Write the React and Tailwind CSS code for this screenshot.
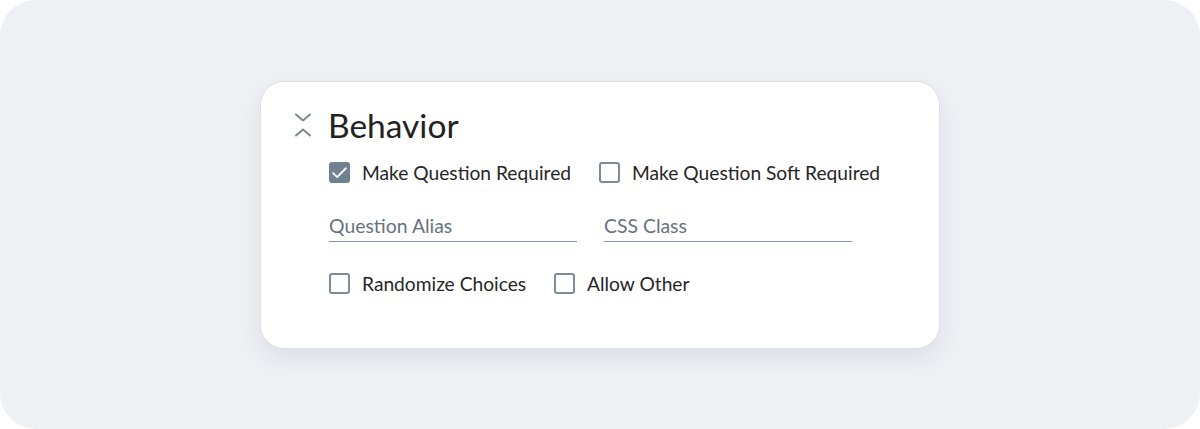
import React from "react";

function Chevrons() {
  return (
    <svg width="18" height="26" viewBox="0 0 18 26" fill="none" stroke="#7c8792" strokeWidth="2" strokeLinecap="round" strokeLinejoin="round">
      <path d="M2 2.5l7 6 7-6" />
      <path d="M2 23.5l7-6 7 6" />
    </svg>
  );
}

function Checkbox({ checked, label }) {
  return (
    <label className="flex items-center gap-3 cursor-pointer">
      {checked ? (
        <span className="flex h-[21px] w-[21px] items-center justify-center rounded-[3px] bg-[#708191]">
          <svg width="17" height="17" viewBox="0 0 16 16" fill="none" stroke="white" strokeWidth="1.7" strokeLinecap="round" strokeLinejoin="round">
            <path d="M2 8.5l3.8 3.8L14 4" />
          </svg>
        </span>
      ) : (
        <span className="h-[21px] w-[21px] rounded-[3px] border-2 border-[#7d8a97] bg-white" />
      )}
      <span className="text-[19.2px] leading-6 text-[#262626]">{label}</span>
    </label>
  );
}

function Field({ placeholder }) {
  return (
    <input
      placeholder={placeholder}
      className="w-[248px] border-b-[1.5px] border-[#8496a8] pb-[3px] text-[19.4px] leading-6 text-[#262626] outline-none placeholder:text-[#66737f]"
    />
  );
}

export default function App() {
  return (
    <div className="flex h-[429px] w-[1200px] items-center justify-center rounded-[36px] bg-[#eff0f4] font-['Lato',sans-serif]">
      <div className="h-[268px] w-[680px] rounded-[24px] border border-[#dde0e5] bg-white pl-[33px] pt-[23px] shadow-[0_10px_24px_rgba(30,40,60,0.08)]">
        <div className="flex items-center gap-4">
          <Chevrons />
          <h2 className="text-[33.5px] leading-10 text-[#222222]">Behavior</h2>
        </div>
        <div className="ml-[35px]">
          <div className="mt-4 flex gap-7">
            <Checkbox checked label="Make Question Required" />
            <Checkbox label="Make Question Soft Required" />
          </div>
          <div className="mt-[29px] flex gap-[27px]">
            <Field placeholder="Question Alias" />
            <Field placeholder="CSS Class" />
          </div>
          <div className="mt-[30px] flex gap-7">
            <Checkbox label="Randomize Choices" />
            <Checkbox label="Allow Other" />
          </div>
        </div>
      </div>
    </div>
  );
}
